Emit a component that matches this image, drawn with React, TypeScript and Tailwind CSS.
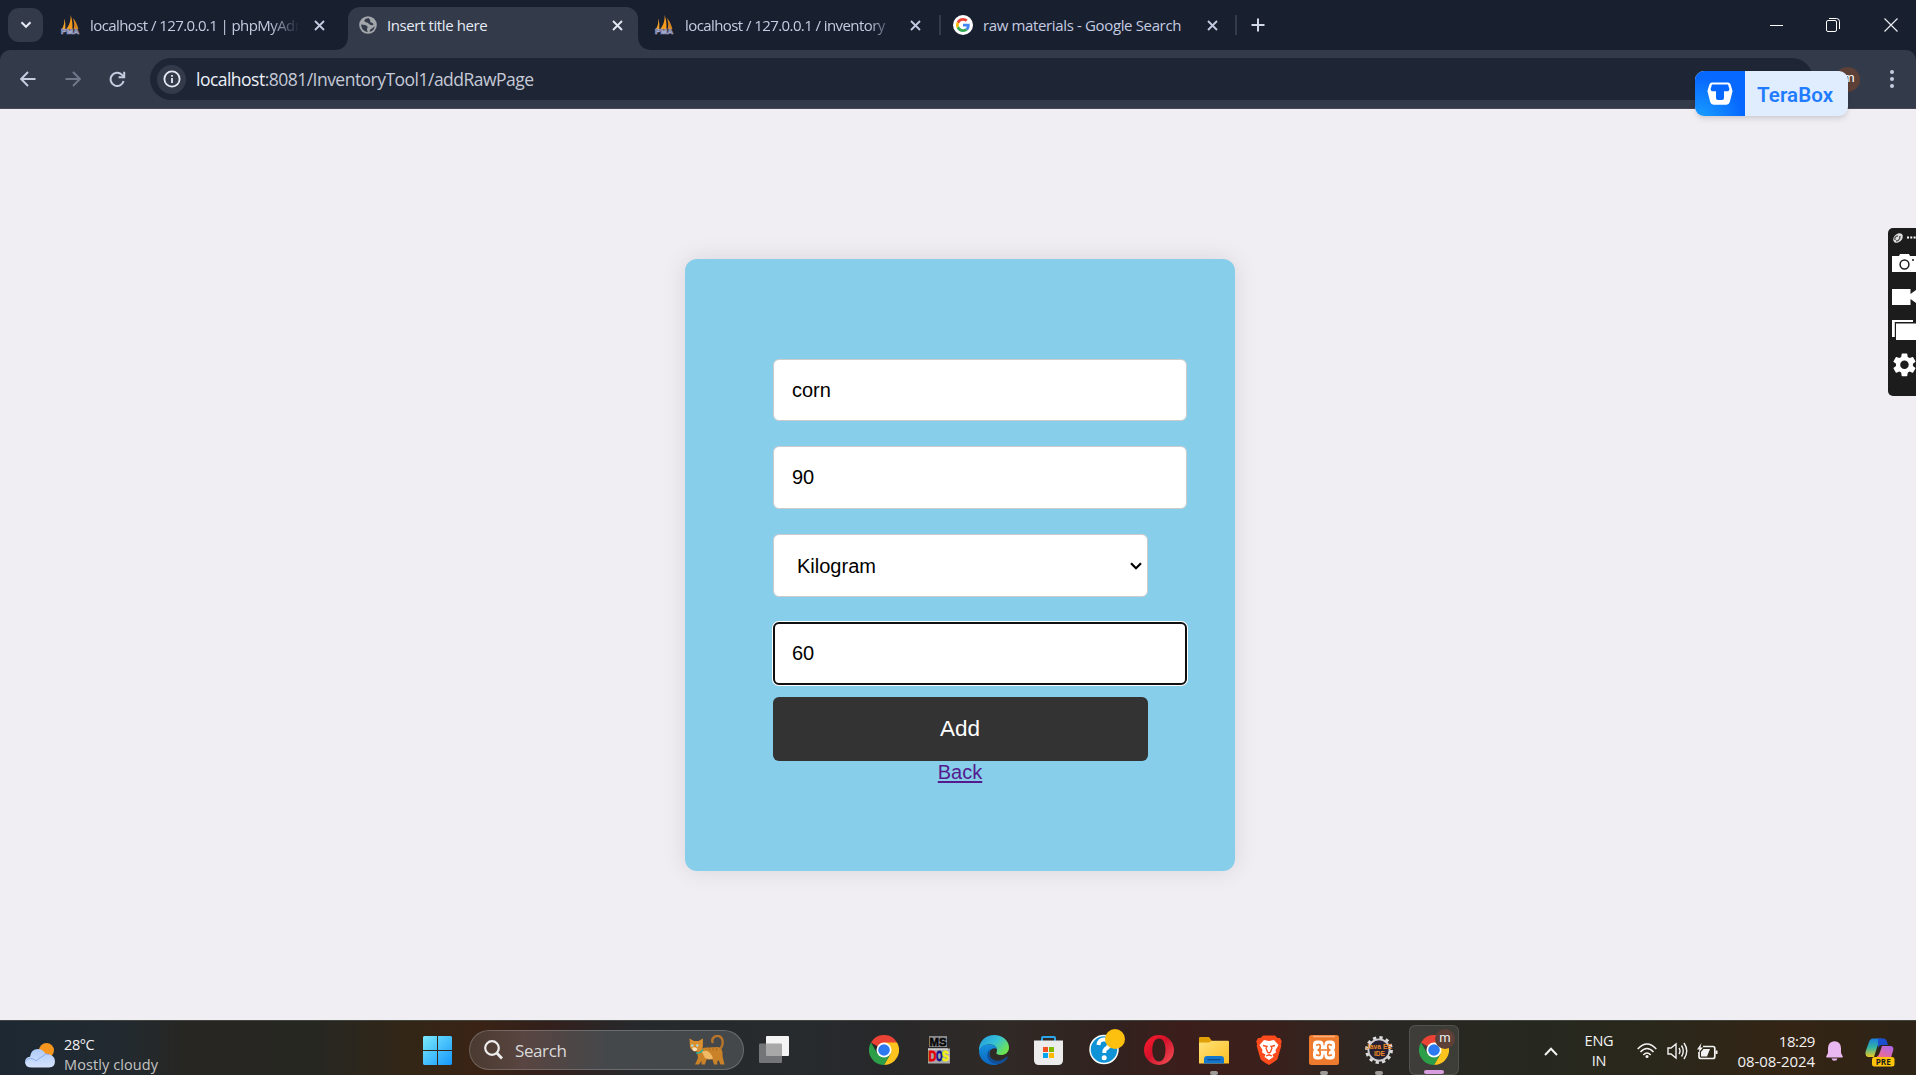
import type { ReactNode } from "react";

const UI = "font-['Open_Sans','Noto_Sans',sans-serif]";

function PmaIcon() {
  return (
    <svg width="20" height="20" viewBox="0 0 20 20" className="shrink-0">
      <path d="M4.2 3.5 C4.6 8 4 11 1.2 15 L5.2 14.5 C5.6 10 5.3 6 4.2 3.5Z" fill="#f5a12a" />
      <path d="M10.6 0 C11 6 9 11 6 14.5 L12.4 14.5 C12.8 9 12.2 4 10.6 0Z" fill="#f79a1c" />
      <path d="M12.8 3 C14.5 7 14.6 11 13.6 14.5 L18.4 14 C17 9 15.4 5.5 12.8 3Z" fill="#d9851f" />
      <text x="10" y="19.4" textAnchor="middle" textLength="18" lengthAdjust="spacingAndGlyphs" fontFamily="Liberation Sans" fontWeight="700" fontSize="7.5" fill="#182030" stroke="#a9acd0" strokeWidth="0.7">PMA</text>
    </svg>
  );
}

function GlobeIcon() {
  return (
    <svg width="18" height="18" viewBox="0 0 18 18" className="shrink-0">
      <circle cx="9" cy="9" r="8.8" fill="#a3a6aa" />
      <path d="M9.8 2 C7 2.2 4.6 4 5.6 5.6 C6.6 6.8 8.6 6.2 9.6 7.4 C10.4 8.6 11.6 9 14.2 9.2 C14.6 7 13.6 6.6 12 6.4 C10.6 6 11.6 4.6 11 3.8 C10.6 3 9.6 3 9.8 2Z" fill="#333b4b" />
      <path d="M2.2 8.6 C4.6 9 7.4 8.8 8.4 10.4 C9.2 12 7.6 12.4 8 14 C8.2 15 8.8 15.6 9 16 C5 16 2 12.6 2.2 8.6Z" fill="#333b4b" />
      <path d="M10.6 15.8 C10.6 14 11.6 13.2 13 12.4 C14.2 11.8 14.8 10.6 15.8 10.4 C15.2 13.400 13.2 15.400 10.6 15.8Z" fill="#333b4b" />
    </svg>
  );
}

function GoogleIcon() {
  return (
    <svg width="20" height="20" viewBox="0 0 20 20" className="shrink-0">
      <circle cx="10" cy="10" r="10" fill="#fff" />
      <g transform="translate(3 3) scale(0.292)">
        <path fill="#EA4335" d="M24 9.5c3.54 0 6.71 1.22 9.21 3.6l6.85-6.85C35.9 2.38 30.47 0 24 0 14.62 0 6.51 5.38 2.56 13.22l7.98 6.19C12.43 13.72 17.74 9.5 24 9.5z" />
        <path fill="#4285F4" d="M46.98 24.55c0-1.57-.15-3.09-.38-4.55H24v9.02h12.94c-.58 2.96-2.26 5.48-4.78 7.18l7.73 6c4.51-4.18 7.09-10.36 7.09-17.65z" />
        <path fill="#FBBC05" d="M10.53 28.59c-.48-1.45-.76-2.99-.76-4.59s.27-3.14.76-4.59l-7.98-6.19C.92 16.46 0 20.12 0 24c0 3.88.92 7.54 2.56 10.78l7.97-6.19z" />
        <path fill="#34A853" d="M24 48c6.48 0 11.93-2.13 15.89-5.81l-7.73-6c-2.15 1.45-4.92 2.3-8.16 2.3-6.26 0-11.57-4.22-13.47-9.91l-7.98 6.19C6.51 42.62 14.62 48 24 48z" />
      </g>
    </svg>
  );
}

function Cross({ color }: { color: string }) {
  return (
    <svg width="11" height="11" viewBox="0 0 11 11" className="shrink-0">
      <path d="M1 1 L10 10 M10 1 L1 10" stroke={color} strokeWidth="1.8" />
    </svg>
  );
}

function TabStrip() {
  return (
    <div className={`flex h-[50px] items-center bg-[#182030] text-[15px] text-[#c5cbe0] ${UI}`}>
      <div className="ml-2 flex h-[34px] w-[35px] items-center justify-center rounded-[11px] bg-[#333b4b]">
        <svg width="12" height="8" viewBox="0 0 12 8">
          <path d="M1.5 1.2 L6 5.8 L10.5 1.2" fill="none" stroke="#e6eaf5" strokeWidth="2" />
        </svg>
      </div>
      <div className="ml-[17px] flex w-[267px] items-center">
        <PmaIcon />
        <span className="ml-2.5 w-[209px] overflow-hidden whitespace-nowrap tracking-[-0.58px] [mask-image:linear-gradient(to_right,#000_86%,transparent)]">localhost / 127.0.0.1 | phpMyAdmin</span>
        <span className="ml-[15px]"><Cross color="#c5cbe0" /></span>
      </div>
      <div className="flex h-[50px] w-[320px] items-end">
        <svg width="21" height="42" viewBox="0 0 21 42" className="shrink-0">
          <path d="M7 42 C17 42 21 36 21 28 V42Z" fill="#333b4b" />
        </svg>
        <div className="flex h-[43px] w-[290px] shrink-0 items-center rounded-t-xl bg-[#333b4b] pb-[7px]">
          <span className="ml-[11px]"><GlobeIcon /></span>
          <span className="ml-[10px] w-[225px] whitespace-nowrap tracking-[-0.4px] text-[#e6eaf5]">Insert title here</span>
          <Cross color="#e6eaf5" />
        </div>
        <svg width="14" height="14" viewBox="0 0 14 14" className="shrink-0">
          <path d="M0 0 C0 9 5 14 14 14 H0Z" fill="#333b4b" />
        </svg>
      </div>
      <div className="ml-[7px] flex w-[285px] items-center">
        <PmaIcon />
        <span className="ml-[11px] w-[209px] overflow-hidden whitespace-nowrap tracking-[-0.58px] [mask-image:linear-gradient(to_right,#000_88%,transparent)]">localhost / 127.0.0.1 / inventory</span>
        <span className="ml-[16px]"><Cross color="#c5cbe0" /></span>
      </div>
      <div className="h-5 w-0.5 bg-[#333b4b]" />
      <div className="ml-[12px] flex w-[282px] items-center">
        <GoogleIcon />
        <span className="ml-2.5 w-[224px] whitespace-nowrap tracking-[-0.36px]">raw materials - Google Search</span>
        <Cross color="#c5cbe0" />
      </div>
      <div className="h-5 w-0.5 bg-[#333b4b]" />
      <svg width="14" height="14" viewBox="0 0 14 14" className="ml-[14px]">
        <path d="M7 0.5 V13.5 M0.5 7 H13.5" stroke="#d3d8e8" strokeWidth="2" />
      </svg>
      <div className="ml-auto flex items-center pr-[18px]">
        <div className="h-px w-[13px] bg-white" />
        <svg width="14" height="14" viewBox="0 0 14 14" className="ml-[43px]" fill="none" stroke="#fff">
          <rect x="0.5" y="2.5" width="10" height="11" rx="1.5" />
          <path d="M3 0.5 H10.5 Q13.5 0.5 13.5 3.5 V11" />
        </svg>
        <svg width="14" height="14" viewBox="0 0 14 14" className="ml-[44px]">
          <path d="M0.5 0.5 L13.5 13.5 M13.5 0.5 L0.5 13.5" stroke="#e8eaf0" strokeWidth="1.2" />
        </svg>
      </div>
    </div>
  );
}

function Toolbar() {
  return (
    <div className="bg-[#182030]">
      <div className="flex h-[59px] items-center rounded-t-[10px] border-b border-[#4b4653] bg-[#333b4b]">
        <svg width="16" height="16" viewBox="0 0 16 16" className="ml-[20px]" fill="none" stroke="#c6cce0" strokeWidth="1.9">
          <path d="M15.5 8 H1.5 M8 1 L1.2 8 L8 15" />
        </svg>
        <svg width="16" height="16" viewBox="0 0 16 16" className="ml-[29px]" fill="none" stroke="#707889" strokeWidth="1.9">
          <path d="M0.5 8 H14.5 M8 1 L14.8 8 L8 15" />
        </svg>
        <svg width="17" height="17" viewBox="0 0 17 17" className="ml-[28px]" fill="none" stroke="#c6cce0" strokeWidth="2">
          <path d="M14.6 10 A6.6 6.6 0 1 1 12.8 3.6 L15 5.8" />
          <path d="M15.2 0.8 V6.2 H9.6" />
        </svg>
        <div className="ml-[24px] flex h-[42px] w-[1663px] items-center rounded-full bg-[#1e2636]">
          <div className="ml-[7px] flex h-[29px] w-[29px] items-center justify-center rounded-full bg-[#333b4b]">
            <svg width="18" height="18" viewBox="0 0 18 18" fill="none" stroke="#e6eaf5">
              <circle cx="9" cy="9" r="7.6" strokeWidth="1.8" />
              <path d="M9 8 V13 M9 5 V6.8" strokeWidth="1.8" />
            </svg>
          </div>
          <span className={`ml-[10px] whitespace-nowrap text-[17.5px] tracking-[-0.52px] text-[#c6cad6] ${UI}`}>
            <span className="text-[#eceff8]">localhost</span>:8081/InventoryTool1/addRawPage
          </span>
        </div>
        <div className="ml-[22px] flex h-[25px] w-[25px] items-center justify-center rounded-full bg-[#5d4037] font-['Roboto',sans-serif] text-[13px] text-white">
          <span className="pb-[2px] pl-[3px]">m</span>
        </div>
        <svg width="4" height="18" viewBox="0 0 4 18" className="ml-[30px]" fill="#c6cce0">
          <circle cx="2" cy="2" r="2" />
          <circle cx="2" cy="9" r="2" />
          <circle cx="2" cy="16" r="2" />
        </svg>
      </div>
    </div>
  );
}

function TeraBoxBadge() {
  return (
    <div className="absolute left-[1695px] top-[71px] flex h-[45px] w-[153px] overflow-hidden rounded-[9px] bg-[#e0edff] shadow-md">
      <div className="flex w-[50px] shrink-0 items-center justify-center bg-[radial-gradient(circle_at_10%_110%,#1aa0ff,#0668ff_65%)]">
        <svg width="26" height="23" viewBox="0 0 26 23">
          <path d="M5 0.5 H21 Q23 0.5 23.6 2.5 L25.6 9 L22.8 20 Q22 22.7 19.5 22.7 H6.5 Q4 22.7 3.2 20 L0.4 9 L2.4 2.5 Q3 0.5 5 0.5Z" fill="#fff" />
          <path d="M5 2.4 H21 L22.4 7 Q22.4 9.2 20.5 9.2 H17 V16 Q17 18 15 18 H11 Q9 18 9 16 V9.2 H5.5 Q3.600 9.2 3.600 7Z" fill="#0668ff" />
        </svg>
      </div>
      <span className="ml-[12px] self-center pt-[3px] font-['Roboto',sans-serif] text-[20.5px] font-semibold tracking-[0.1px] text-[#1f7cff]">TeraBox</span>
    </div>
  );
}

function CaptureDock() {
  return (
    <div className="absolute left-[1888px] top-[228px] h-[168px] w-7 overflow-hidden rounded-l-[5px] bg-[#1c1c1c]">
      <svg width="28" height="168" viewBox="0 0 28 168">
        <ellipse cx="10" cy="10" rx="5.5" ry="4" transform="rotate(-45 10 10)" fill="#ddd" />
        <path d="M7 12 Q6 8 10 8 M8 13 Q12 13 12 8" stroke="#1c1c1c" fill="none" />
        <path d="M19 9.6 H28" stroke="#fff" strokeWidth="2" strokeDasharray="2 1.3" />
        <path d="M4 28 H11 L12 26 H21 L22 28 H28 V44 H4Z" fill="#fff" />
        <circle cx="16.5" cy="36.5" r="4.4" fill="none" stroke="#1c1c1c" strokeWidth="1.5" />
        <path d="M24 32 H26" stroke="#1c1c1c" strokeWidth="1.5" />
        <path d="M4 61 H22.5 V66 L28 62 V75 L22.5 71 V77 H4Z" fill="#fff" />
        <path d="M4 92 H25 V94 H6.8 V109 H4Z" fill="#fff" />
        <rect x="8" y="95.5" width="20" height="16.5" fill="#fff" />
        <g transform="translate(2.3 122.7) scale(1.18)">
          <path fill="#fff" d="M19.14 12.94c.04-.3.06-.61.06-.94s-.02-.64-.07-.94l2.03-1.58a.49.49 0 0 0 .12-.61l-1.92-3.32a.49.49 0 0 0-.59-.22l-2.39.96a7 7 0 0 0-1.62-.94l-.36-2.54A.48.48 0 0 0 13.92 2.4h-3.84a.48.48 0 0 0-.47.41l-.36 2.54c-.59.24-1.13.57-1.62.94l-2.39-.96a.49.49 0 0 0-.59.22L2.73 8.87a.48.48 0 0 0 .12.61l2.03 1.58a6.6 6.6 0 0 0 0 1.88l-2.03 1.58a.49.49 0 0 0-.12.61l1.92 3.32c.12.22.37.29.59.22l2.39-.96c.5.38 1.03.7 1.62.94l.36 2.54c.05.24.24.41.48.41h3.84c.24 0 .44-.17.47-.41l.36-2.54a7 7 0 0 0 1.62-.94l2.39.96c.22.08.47 0 .59-.22l1.92-3.32a.48.48 0 0 0-.12-.61zM12 15.6a3.6 3.6 0 1 1 0-7.2 3.6 3.6 0 0 1 0 7.2z" />
        </g>
      </svg>
    </div>
  );
}

function RawMaterialForm() {
  const field = "border border-[#ccc] bg-white rounded-[6px] text-[20px] leading-[23px] text-black outline-none";
  return (
    <form className="mt-[150px] flex h-[612px] w-[550px] flex-col items-start rounded-xl bg-[#87ceeb] pl-[88px] pt-[100px] font-['Liberation_Sans',Arial,sans-serif] shadow-[0_0_25px_rgba(0,0,0,0.1)]">
      <input className={`h-[62px] w-[414px] px-[18px] ${field}`} defaultValue="corn" />
      <input className={`mt-[25px] h-[63px] w-[414px] px-[18px] pb-px ${field}`} defaultValue="90" />
      <div className={`mt-[25px] flex h-[63px] w-[375px] items-center justify-between pl-[23px] pr-[5px] pt-px ${field}`}>
        <span>Kilogram</span>
        <svg width="12" height="8" viewBox="0 0 12 8">
          <path d="M1 1.3 L6 6.2 L11 1.3" fill="none" stroke="#000" strokeWidth="2.2" />
        </svg>
      </div>
      <input className="mt-[25px] h-[63px] w-[414px] rounded-[6px] border-2 border-[#101010] bg-white px-[17px] pb-px text-[20px] text-black shadow-[0_0_0_1px_#fff] outline-none" defaultValue="60" />
      <button type="button" className="mt-3 h-16 w-[375px] rounded-[6px] bg-[#333] pb-px pr-px text-[22.5px] text-white">Add</button>
      <div className="flex w-[374px] justify-center">
        <a className="text-[20px] leading-[23px] text-[#551a8b] underline decoration-2 underline-offset-2">Back</a>
      </div>
    </form>
  );
}

function ChromeLogo() {
  return (
    <svg width="30" height="30" viewBox="0 0 30 30">
      <path d="M15 15 L2 7.5 A15 15 0 0 1 28 7.5Z" fill="#ea4335" />
      <path d="M15 7.5 H28 A15 15 0 0 1 15 30 L21.5 18.75Z" fill="#fcc31e" />
      <path d="M2 7.5 L8.5 18.75 L15 22.5 L21.5 18.75 L15 30 A15 15 0 0 1 2 7.5Z" fill="#2c9f48" />
      <circle cx="15" cy="15" r="7.5" fill="#fff" />
      <circle cx="15" cy="15" r="5.8" fill="#2d7af0" />
    </svg>
  );
}

function DosLogo() {
  return (
    <svg width="22" height="28" viewBox="0 0 22 28">
      <rect x="1" y="0" width="18" height="11" fill="#8a8a8a" />
      <rect x="0" y="12.500" width="22" height="15" fill="#a8a8a8" />
      <path d="M0 13 H20" stroke="#eee" />
      <text x="10" y="9.500" textAnchor="middle" textLength="17" lengthAdjust="spacingAndGlyphs" fontFamily="Liberation Sans" fontWeight="700" fontSize="11" fill="#050505" stroke="#050505" strokeWidth="0.500">MS</text>
      <g fontFamily="Liberation Sans" fontWeight="700" fontSize="14">
        <text x="0.500" y="25" textLength="8" lengthAdjust="spacingAndGlyphs" fill="#e60000" stroke="#e60000" strokeWidth="0.800">D</text>
        <text x="8" y="25" textLength="6.500" lengthAdjust="spacingAndGlyphs" fill="#10108c" stroke="#10108c" strokeWidth="0.800">O</text>
        <text x="14" y="25" textLength="7" lengthAdjust="spacingAndGlyphs" fill="#f5ef10" stroke="#f5ef10" strokeWidth="0.800">S</text>
      </g>
    </svg>
  );
}

function EdgeLogo() {
  return (
    <svg width="30" height="30" viewBox="0 0 30 30">
      <defs>
        <linearGradient id="edgeTop" x1="0" y1="0" x2="1" y2="0.6">
          <stop offset="0" stopColor="#2296dc" />
          <stop offset="0.55" stopColor="#35c1d8" />
          <stop offset="1" stopColor="#6fe34f" />
        </linearGradient>
        <linearGradient id="edgeLow" x1="0" y1="0" x2="0" y2="1">
          <stop offset="0" stopColor="#1690de" />
          <stop offset="1" stopColor="#0c66bd" />
        </linearGradient>
      </defs>
      <path d="M0 13.5 C1 5 7.500 0 15 0 C24 0 30 6 30 12.500 C30 17.500 26 20 22 20 C18.500 20 17 18.800 17.400 17.800 C19 15.500 18 9.500 11 9.500 C5 9.500 1 12 0 17Z" fill="url(#edgeTop)" />
      <path d="M0 16 C1.500 11 6 9.300 10.500 9.600 C15 9.800 18 12 18.300 14 C14 11.500 9.500 15 10.500 20 C11.500 25.500 17 28.500 22 27.500 C19.500 29.500 17 30 15 30 C6 30 0 23.500 0 16Z" fill="url(#edgeLow)" />
      <path d="M11.800 13.800 C8.500 17 10 23 15 25 C20 27 25 24.500 27.500 21.700 C28.500 21 29 22 28.400 23 C26.500 26 23 28.500 20.500 29 C12 30 7 24 8.500 18.500 C9 16 10 14.500 11.800 13.800Z" fill="#124f99" />
    </svg>
  );
}

function StoreLogo() {
  return (
    <svg width="29" height="30" viewBox="0 0 29 30">
      <path d="M8 6.500 V3 Q8 2 9 2 H20 Q21 2 21 3 V6.500" fill="none" stroke="#2aa7e8" strokeWidth="2" />
      <path d="M0 5.500 H29 V25 Q29 30 24 30 H5 Q0 30 0 25Z" fill="#ececec" />
      <path d="M9 12 h5 v5 h-5Z" fill="#f25022" />
      <path d="M15 12 h5 v5 h-5Z" fill="#7fba00" />
      <path d="M9 18 h5 v5 h-5Z" fill="#00a4ef" />
      <path d="M15 18 h5 v5 h-5Z" fill="#ffb900" />
    </svg>
  );
}

function HelpLogo() {
  return (
    <svg width="36" height="36" viewBox="0 0 36 36">
      <circle cx="15" cy="20.500" r="14" fill="#0f93d6" stroke="#fff" strokeWidth="1.500" />
      <path d="M9.500 16 Q10 10 15.500 10.500 Q21 11 20 16 Q19.500 18.500 16.500 20 Q15.300 21 15.300 24" fill="none" stroke="#fff" strokeWidth="4" />
      <circle cx="15.200" cy="28.800" r="2.500" fill="#fff" />
      <circle cx="26" cy="10" r="10" fill="#fdc00f" />
    </svg>
  );
}

function OperaLogo() {
  return (
    <svg width="30" height="30" viewBox="0 0 30 30">
      <defs>
        <linearGradient id="opera" x1="0" y1="0" x2="1" y2="1">
          <stop offset="0" stopColor="#ff1b2d" />
          <stop offset="0.450" stopColor="#d3122b" />
          <stop offset="1" stopColor="#f5555a" />
        </linearGradient>
      </defs>
      <path fillRule="evenodd" d="M15 0 A15 15 0 1 0 15 30 A15 15 0 1 0 15 0Z M15 3.500 C19.500 3.500 21.500 9 21.500 15 C21.500 21 19.500 26.500 15 26.500 C10.500 26.500 8.300 21 8.300 15 C8.300 9 10.500 3.500 15 3.500Z" fill="url(#opera)" />
    </svg>
  );
}

function ExplorerLogo() {
  return (
    <svg width="30" height="27" viewBox="0 0 30 27">
      <defs>
        <linearGradient id="folder" x1="0" y1="0" x2="1" y2="1">
          <stop offset="0" stopColor="#ffe27a" />
          <stop offset="1" stopColor="#fcbf22" />
        </linearGradient>
      </defs>
      <path d="M0 1 Q0 0 1 0 H10 L13 4 H20 V10 H0Z" fill="#e0a008" />
      <path d="M0 5.500 H10 L13 3.800 H29 Q30 3.800 30 5 V26.500 H0Z" fill="url(#folder)" />
      <path d="M5 26.500 V22 Q5 19 8 19 H22 Q25 19 25 22 V26.500Z" fill="#1377cf" />
      <path d="M8.500 22.700 H21.500" stroke="#0b4a86" strokeWidth="1.300" />
    </svg>
  );
}

function BraveLogo() {
  return (
    <svg width="26" height="30" viewBox="0 0 26 30">
      <path d="M7 0.500 H19 L21.500 3 L24 3 L25.800 6.500 L25 9 L25.300 11 L21.500 24 Q21 25.500 13 30 Q5 25.500 4.500 24 L0.700 11 L1 9 L0.200 6.500 L2 3 L4.500 3Z" fill="#fb4a1c" />
      <path d="M8 5 L13 6 L18 5 L22.500 10 L19.500 15 L20 17.500 L16.500 19.500 L17.500 22 L13 25 L8.500 22 L9.500 19.500 L6 17.500 L6.500 15 L3.500 10Z" fill="#fff" />
      <path d="M7 10.500 L11 11.500 L10 13 L11.500 17 L13 18 L14.500 17 L16 13 L15 11.500 L19 10.500 M10 21 L13 19.800 L16 21" stroke="#fb4a1c" strokeWidth="1.300" fill="none" />
    </svg>
  );
}

function XamppLogo() {
  return (
    <svg width="30" height="30" viewBox="0 0 30 30">
      <rect width="30" height="30" rx="2.500" fill="#ee7a2d" />
      <path d="M4 1.500 H26" stroke="#f9b07c" strokeWidth="1.500" />
      <g fill="#fff">
        <rect x="4" y="5.500" width="10.500" height="10.500" rx="4" />
        <rect x="15.500" y="5.500" width="10.500" height="10.500" rx="4" />
        <rect x="4" y="14" width="10.500" height="10.500" rx="4" />
        <rect x="15.500" y="14" width="10.500" height="10.500" rx="4" />
        <rect x="9" y="10.500" width="12" height="9" />
      </g>
      <path d="M7.800 10 Q11.300 8.500 11.300 11.500 Q11.300 15 8.500 15 Q11.300 15 11.300 18.500 Q11.300 21.500 7.800 20 M22.200 10 Q18.700 8.500 18.700 11.500 Q18.700 15 21.500 15 Q18.700 15 18.700 18.500 Q18.700 21.500 22.200 20 M10.500 15 H19.500" fill="none" stroke="#ee7a2d" strokeWidth="1.700" strokeLinecap="round" />
    </svg>
  );
}

function JavaEELogo() {
  return (
    <svg width="28" height="28" viewBox="0 0 28 28">
      <circle cx="14" cy="14" r="12.400" fill="none" stroke="#ddd" strokeWidth="3" strokeDasharray="3.250 3.250" />
      <circle cx="14" cy="14" r="10.600" fill="#262033" stroke="#cfcfcf" strokeWidth="1.800" />
      <text x="14" y="13" textAnchor="middle" textLength="26" lengthAdjust="spacingAndGlyphs" fontFamily="Liberation Sans" fontWeight="700" fontSize="7" fill="#f08a24">Java EE</text>
      <text x="14.500" y="19.500" textAnchor="middle" textLength="11" lengthAdjust="spacingAndGlyphs" fontFamily="Liberation Sans" fontWeight="700" fontSize="7" fill="#f08a24">IDE</text>
    </svg>
  );
}

function Cat() {
  return (
    <svg width="36" height="30" viewBox="0 0 36 30">
      <path d="M29 15 C33 13 34 9 33.500 5.500 C33 1.500 29 0 26 1.500 C23.500 3 23 5.500 23.500 7" fill="none" stroke="#b8752a" strokeWidth="2.400" strokeLinecap="round" />
      <path d="M8 16 C14 11 22 13 28 12 C33 12 34 17 33.500 21 L35.500 29.500 H31.500 L29.500 25 L28 27 L28.500 29.500 H25 L23.500 24.500 H17.500 L16 29.500 H12.500 L12.500 26 L10 29.500 H6 L9 23Z" fill="#c98228" />
      <path d="M13 17 C17 14 22 17 24 23.500 Q20 25 16 23Z" fill="#f0b964" />
      <path d="M0.500 3.500 L5 6 H9.500 L14 3.500 L13.800 12 C12.500 18 3 18 1 12Z" fill="#d98f2e" />
      <path d="M3 13 Q6 11 8.500 14 Q7 17 4.500 16Z" fill="#f8e3bd" />
      <circle cx="3.300" cy="10.500" r="1.200" fill="#9fe0ea" />
      <circle cx="8.300" cy="10.500" r="1.200" fill="#9fe0ea" />
      <path d="M7 18 Q12 18.500 14 14.500" fill="none" stroke="#27b3a0" strokeWidth="1.600" />
      <path d="M20 13.500 l1 2 M24 13 l0 2.500 M28 13 l-1 2.500" stroke="#a9691c" />
    </svg>
  );
}

function TaskSlot({ children, running = false }: { children: ReactNode; running?: boolean }) {
  return (
    <div className="relative flex h-[50px] w-[55px] shrink-0 items-center justify-center">
      {children}
      {running && <span className="absolute bottom-0 left-[24px] h-1 w-2 rounded-full bg-[#9c9a97]" />}
    </div>
  );
}

function Taskbar() {
  return (
    <div className={`flex h-[55px] items-start overflow-hidden border-t border-[#41453f] bg-[linear-gradient(90deg,#1d2833_0px,#222a30_120px,#272622_190px,#272722_320px,#332616_410px,#3a2315_480px,#33201d_550px,#26292c_640px,#272b2e_800px,#28282a_880px,#302a26_1000px,#31221f_1110px,#3b1e1b_1180px,#3a201c_1270px,#2a2824_1380px,#26281f_1540px,#2b271a_1680px,#342414_1790px,#2d2417_1916px)] text-[#f2f2f2] ${UI}`}>
      <div className="flex h-full w-[423px] shrink-0 pl-[25px]">
        <svg width="30" height="25" viewBox="0 0 30 25" className="mt-[22px] shrink-0">
          <defs>
            <linearGradient id="cloud" x1="0" y1="0" x2="0" y2="1">
              <stop offset="0" stopColor="#aecbfb" />
              <stop offset="1" stopColor="#d5e3fb" />
            </linearGradient>
          </defs>
          <circle cx="21.500" cy="7.500" r="7.500" fill="#f6961e" />
          <path d="M7 24.500 Q0 24.500 0 19 Q0 14.500 5 13.800 Q6 6 13 6 Q18 6 20 10.500 Q29.500 11 30 18 Q30 24.500 24 24.500Z" fill="url(#cloud)" />
          <path d="M0 19 Q3 14 8 16 Q10 17 11 18 Q14 15 18 13 Q20 10 24 11.500" fill="none" stroke="#8aaef0" strokeWidth="1" />
        </svg>
        <div className="ml-[9px] mt-[14px] whitespace-nowrap text-[14.500px] leading-5">
          <div className="tracking-[-0.4px]">28°C</div>
          <div className="tracking-[0.1px] text-[#c4c4c2]">Mostly cloudy</div>
        </div>
      </div>
      <svg width="29" height="29" viewBox="0 0 29 29" className="mt-[15px] shrink-0">
        <defs>
          <linearGradient id="win" x1="0" y1="0" x2="1" y2="1">
            <stop offset="0" stopColor="#7aeafc" />
            <stop offset="1" stopColor="#1597fb" />
          </linearGradient>
        </defs>
        <path d="M1 0 H14 V14 H0 V1Z M15 0 H28 L29 1 V14 H15Z M0 15 H14 V29 H1 L0 28Z M15 15 H29 V28 L28 29 H15Z" fill="url(#win)" />
      </svg>
      <div className="ml-[17px] mt-[9px] flex h-10 w-[275px] shrink-0 items-center rounded-full border border-white/20 bg-[linear-gradient(90deg,#4a3a30_0%,#594541_20%,#4c4646_38%,#45484b_50%,#45484b_100%)] bg-origin-border">
        <svg width="19" height="20" viewBox="0 0 19 20" className="ml-[14px]" fill="none" stroke="#eee" strokeWidth="2.200">
          <circle cx="8" cy="8" r="6.800" />
          <path d="M12.800 13 L18 18.500" strokeWidth="2.800" />
        </svg>
        <span className="ml-3 pt-[2px] text-[17px] tracking-[-0.400px] text-[#dadada]">Search</span>
        <span className="ml-auto mr-[18px]"><Cat /></span>
      </div>
      <svg width="30" height="27" viewBox="0 0 30 27" className="ml-[15px] mt-[15px] shrink-0">
        <rect x="7" y="0" width="23" height="20" rx="1" fill="#f4f4f4" />
        <rect x="0" y="7.500" width="23" height="19.500" rx="1" fill="#8f8f8f" fillOpacity="0.750" />
      </svg>
      <div className="ml-[67px] flex h-[54px] w-[605px] shrink-0 items-end">
        <TaskSlot><ChromeLogo /></TaskSlot>
        <TaskSlot><DosLogo /></TaskSlot>
        <TaskSlot><EdgeLogo /></TaskSlot>
        <TaskSlot><StoreLogo /></TaskSlot>
        <TaskSlot><span className="mb-[6px] ml-[6px]"><HelpLogo /></span></TaskSlot>
        <TaskSlot><OperaLogo /></TaskSlot>
        <TaskSlot running><ExplorerLogo /></TaskSlot>
        <TaskSlot><BraveLogo /></TaskSlot>
        <TaskSlot running><XamppLogo /></TaskSlot>
        <TaskSlot running><JavaEELogo /></TaskSlot>
        <div className="relative ml-[3px] flex h-[50px] w-[50px] shrink-0 items-center justify-center rounded-md border border-white/10 bg-white/10">
          <ChromeLogo />
          <span className="absolute left-[25px] top-[3px] flex h-5 w-5 items-center justify-center rounded-full bg-[#5d4037] pb-0.5 font-['Roboto',sans-serif] text-[13px] text-[#eee]">m</span>
          <span className="absolute bottom-0 left-[14px] h-1 w-5 rounded-full bg-[#d99ee0]" />
        </div>
      </div>
      <div className="ml-auto flex h-[60px] shrink-0 items-center pr-[21px]">
        <svg width="14" height="9" viewBox="0 0 14 9">
          <path d="M1 8 L7 1.800 L13 8" fill="none" stroke="#f2f2f2" strokeWidth="2" />
        </svg>
        <div className="ml-[25px] w-8 text-center text-[14.500px] leading-5 tracking-[-0.2px]">
          <div>ENG</div>
          <div>IN</div>
        </div>
        <svg width="20" height="16" viewBox="0 0 20 16" className="ml-[22px]" fill="none" stroke="#f2f2f2" strokeWidth="1.500">
          <path d="M0.700 6 Q10 -4 19.300 6" />
          <path d="M3.500 9 Q10 2 16.500 9" />
          <path d="M6.300 12 Q10 8 13.700 12" />
          <circle cx="10" cy="13.500" r="1.500" fill="#f2f2f2" stroke="none" />
        </svg>
        <svg width="21" height="18" viewBox="0 0 21 18" className="ml-[10px]" fill="none" stroke="#f2f2f2" strokeWidth="1.400">
          <path d="M1 6 H4 L9 2 V16 L4 12 H1Z" />
          <path d="M12 6 Q14 9 12 12 M14.500 3.500 Q18 9 14.500 14.500 M17 1 Q22.500 9 17 17" />
        </svg>
        <svg width="21" height="17" viewBox="0 0 21 17" className="ml-[9px]">
          <path d="M6 3.500 H16 Q17.800 3.500 17.800 5.500 V13.500 Q17.800 15.500 16 15.500 H4 Q2 15.500 2 13.500 V9" fill="none" stroke="#f2f2f2" strokeWidth="1.700" />
          <path d="M4 13.500 V9 L6.500 6 H13 L10 13.500Z" fill="#f2f2f2" />
          <path d="M18.500 7.500 H20.500 V11 H18.500Z" fill="#f2f2f2" />
          <path d="M4.500 0 L0 6.500 H2.500 L1.500 10 L6 4.500 H3.500Z" fill="#f2f2f2" />
        </svg>
        <div className="ml-[14px] flex w-[83px] flex-col items-end whitespace-nowrap text-[15px] leading-5">
          <div className="tracking-[-0.4px]">18:29</div>
          <div className="tracking-[-0.080px]">08-08-2024</div>
        </div>
        <svg width="17" height="20" viewBox="0 0 17 20" className="ml-[11px]" fill="#eab8f0">
          <path d="M2 12 V7 Q2.500 0.300 8.500 0.300 Q14.500 0.300 15 7 V12 L16.800 15.500 Q17 16.500 16 16.500 H1 Q0 16.500 0.200 15.500Z" />
          <path d="M5.500 17.500 H11.500 Q11 19.800 8.500 19.800 Q6 19.800 5.500 17.500Z" />
        </svg>
        <svg width="30" height="30" viewBox="0 0 30 30" className="ml-[22px] mt-[3px]">
          <defs>
            <linearGradient id="copA" x1="0" y1="0" x2="0" y2="1">
              <stop offset="0" stopColor="#1a7fe0" />
              <stop offset="0.500" stopColor="#35b5a0" />
              <stop offset="1" stopColor="#f0c820" />
            </linearGradient>
            <linearGradient id="copB" x1="1" y1="0" x2="0.300" y2="1">
              <stop offset="0" stopColor="#a868f0" />
              <stop offset="1" stopColor="#f06a90" />
            </linearGradient>
          </defs>
          <path d="M8 0.500 H17 Q14 2 12.500 8 L9 19 H3 Q-0.500 18 0.800 13 L4 4 Q5 0.500 8 0.500Z" fill="url(#copA)" />
          <path d="M13 0.500 H19 Q21 0.500 22 4 L23 7 H17 Q14 7 13 10Z" fill="#1c4fd0" />
          <path d="M17 8 H25 Q29.500 8 28 13 L26 19.500 H11 Q14 18 15 14Z" fill="url(#copB)" />
          <rect x="7" y="19" width="22.500" height="9.500" rx="2.500" fill="#fdc40a" />
          <text x="18.200" y="26.800" textAnchor="middle" fontFamily="Open Sans" fontWeight="700" fontSize="8.200" fill="#1b1b1b">PRE</text>
        </svg>
      </div>
    </div>
  );
}

export default function App() {
  return (
    <div className="relative flex h-[1075px] w-[1916px] flex-col overflow-hidden bg-[#f0eef3]">
      <TabStrip />
      <Toolbar />
      <main className="flex flex-1 justify-center pl-[4px]">
        <RawMaterialForm />
      </main>
      <Taskbar />
      <TeraBoxBadge />
      <CaptureDock />
    </div>
  );
}
